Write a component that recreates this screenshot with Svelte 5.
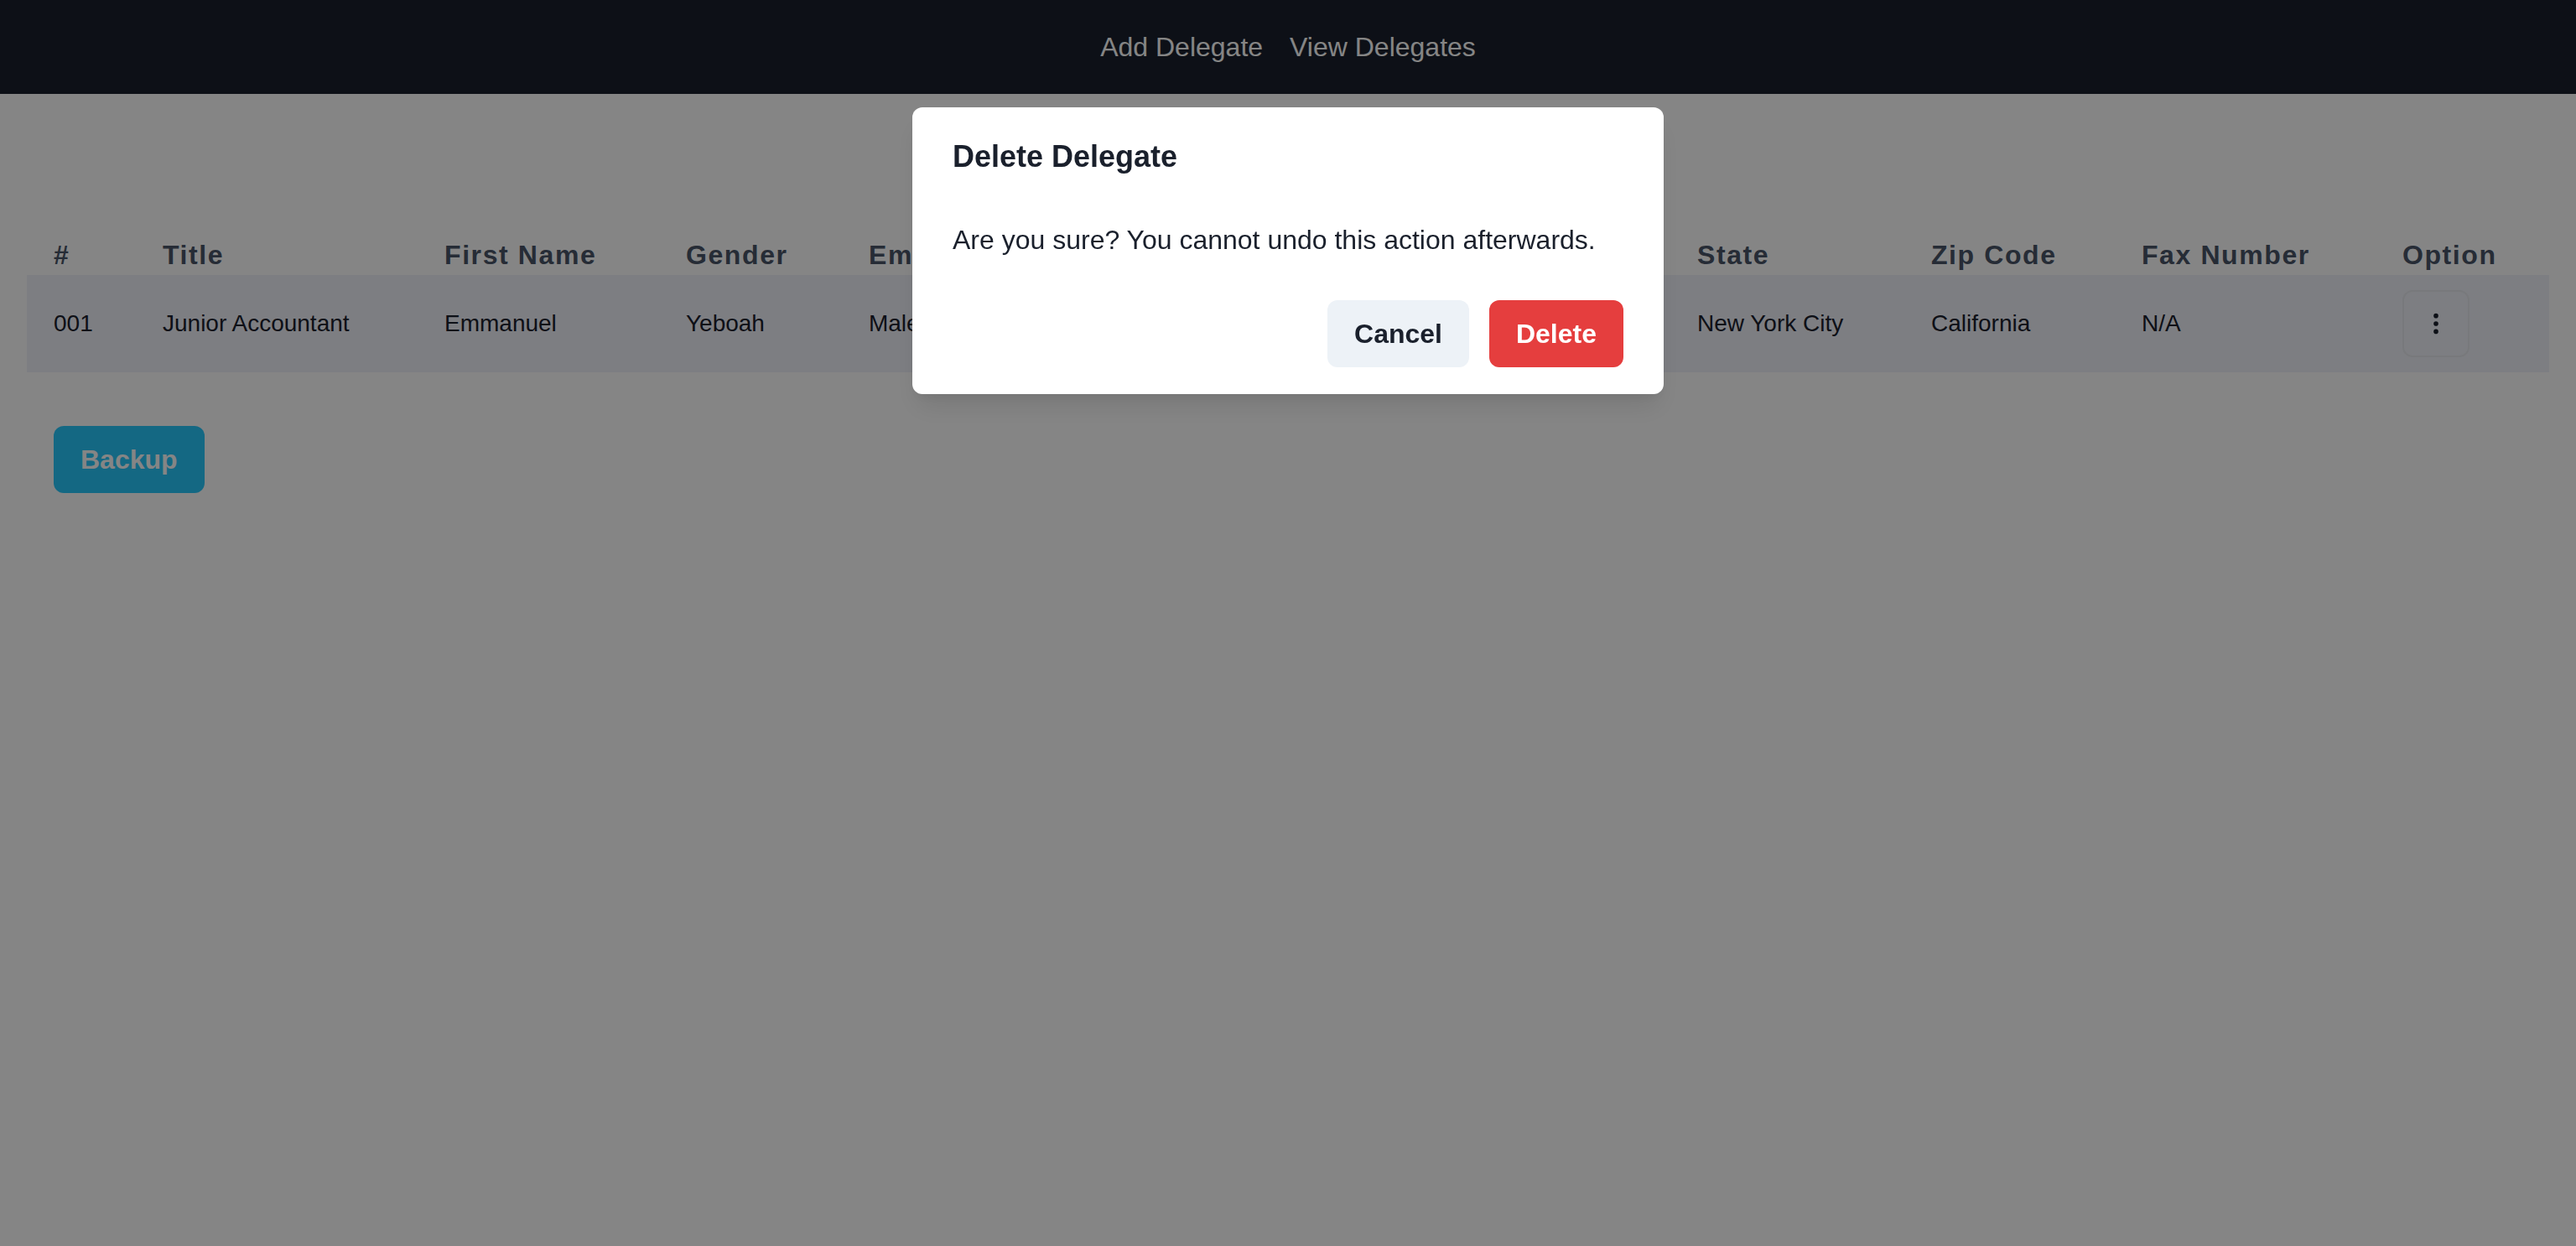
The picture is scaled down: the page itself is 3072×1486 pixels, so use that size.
<script>
  const columns = [
    { label: '#', value: '001', share: 130 },
    { label: 'Title', value: 'Junior Accountant', share: 336 },
    { label: 'First Name', value: 'Emmanuel', share: 288 },
    { label: 'Gender', value: 'Yeboah', share: 218 },
    { label: 'Email', value: 'Male', share: 988 },
    { label: 'State', value: 'New York City', share: 279 },
    { label: 'Zip Code', value: 'California', share: 251 },
    { label: 'Fax Number', value: 'N/A', share: 311 },
    { label: 'Option', value: null, share: 207 }
  ];
  const total = columns.reduce((sum, c) => sum + c.share, 0);
  let open = $state(true);
</script>

<nav>
  <a href="#add">Add Delegate</a>
  <a href="#view">View Delegates</a>
</nav>

<main>
  <table>
    <colgroup>
      {#each columns as c}
        <col style:width="{(c.share / total) * 100}%" />
      {/each}
    </colgroup>
    <thead>
      <tr>
        {#each columns as c}
          <th scope="col">{c.label}</th>
        {/each}
      </tr>
    </thead>
    <tbody>
      <tr>
        {#each columns as c}
          <td>
            {#if c.value}
              {c.value}
            {:else}
              <button class="options" aria-label="Options" onclick={() => (open = true)}>
                <svg viewBox="0 0 16 16" fill="currentColor" aria-hidden="true">
                  <circle cx="8" cy="3" r="1.5" />
                  <circle cx="8" cy="8" r="1.5" />
                  <circle cx="8" cy="13" r="1.5" />
                </svg>
              </button>
            {/if}
          </td>
        {/each}
      </tr>
    </tbody>
  </table>
  <button class="btn backup">Backup</button>
</main>

{#if open}
  <div class="overlay">
    <div class="dialog" role="alertdialog" aria-modal="true" aria-labelledby="dialog-title" aria-describedby="dialog-text">
      <h2 id="dialog-title">Delete Delegate</h2>
      <p id="dialog-text">Are you sure? You cannot undo this action afterwards.</p>
      <footer>
        <button class="btn cancel" onclick={() => (open = false)}>Cancel</button>
        <button class="btn delete" onclick={() => (open = false)}>Delete</button>
      </footer>
    </div>
  </div>
{/if}

<style>
  :global(body) {
    background: #fff;
    color: #1a202c;
    font-family: 'Liberation Sans', Arial, sans-serif;
    font-size: 32px;
    line-height: 48px;
  }

  nav {
    display: flex;
    justify-content: center;
    gap: 32px;
    padding: 32px;
    background: #1a202c;
  }

  nav a {
    color: #fff;
    text-decoration: none;
  }

  main {
    padding: 168px 32px 32px;
  }

  table {
    width: 100%;
    table-layout: fixed;
    border-collapse: collapse;
  }

  th {
    padding: 8px 32px;
    color: #4a5568;
    font-weight: 700;
    line-height: 32px;
    letter-spacing: 0.05em;
    text-align: left;
    white-space: nowrap;
  }

  td {
    height: 80px;
    padding: 18px 32px;
    background: #f0f2f9;
    font-size: 28px;
    line-height: 40px;
    vertical-align: middle;
    white-space: nowrap;
  }

  button {
    font-family: inherit;
    cursor: pointer;
  }

  .options {
    display: flex;
    align-items: center;
    justify-content: center;
    box-sizing: border-box;
    width: 80px;
    height: 80px;
    padding: 0;
    border: 2px solid #e6e8ed;
    border-radius: 12px;
    background: transparent;
    color: #1a202c;
  }

  .options svg {
    width: 30px;
    height: 30px;
  }

  .btn {
    height: 80px;
    padding: 0 32px;
    border: 0;
    border-radius: 12px;
    font-size: 32px;
    font-weight: 700;
    line-height: 38px;
  }

  .backup {
    margin: 64px 32px 0;
    background: #28c8fb;
    color: #fff;
  }

  .overlay {
    position: fixed;
    inset: 0;
    display: flex;
    align-items: flex-start;
    justify-content: center;
    padding: 128px 32px;
    background: rgba(0, 0, 0, 0.48);
  }

  .dialog {
    width: 100%;
    max-width: 896px;
    border-radius: 12px;
    background: #fff;
    box-shadow:
      0 20px 30px -6px rgba(0, 0, 0, 0.1),
      0 8px 12px -4px rgba(0, 0, 0, 0.05);
  }

  h2 {
    margin: 0;
    padding: 32px 48px;
    font-size: 36px;
    font-weight: 700;
    line-height: 54px;
  }

  p {
    margin: 0;
    padding: 16px 48px;
  }

  footer {
    display: flex;
    justify-content: flex-end;
    gap: 24px;
    padding: 32px 48px;
  }

  .cancel {
    background: #edf2f7;
    color: #1a202c;
  }

  .delete {
    background: #e53e3e;
    color: #fff;
  }
</style>
